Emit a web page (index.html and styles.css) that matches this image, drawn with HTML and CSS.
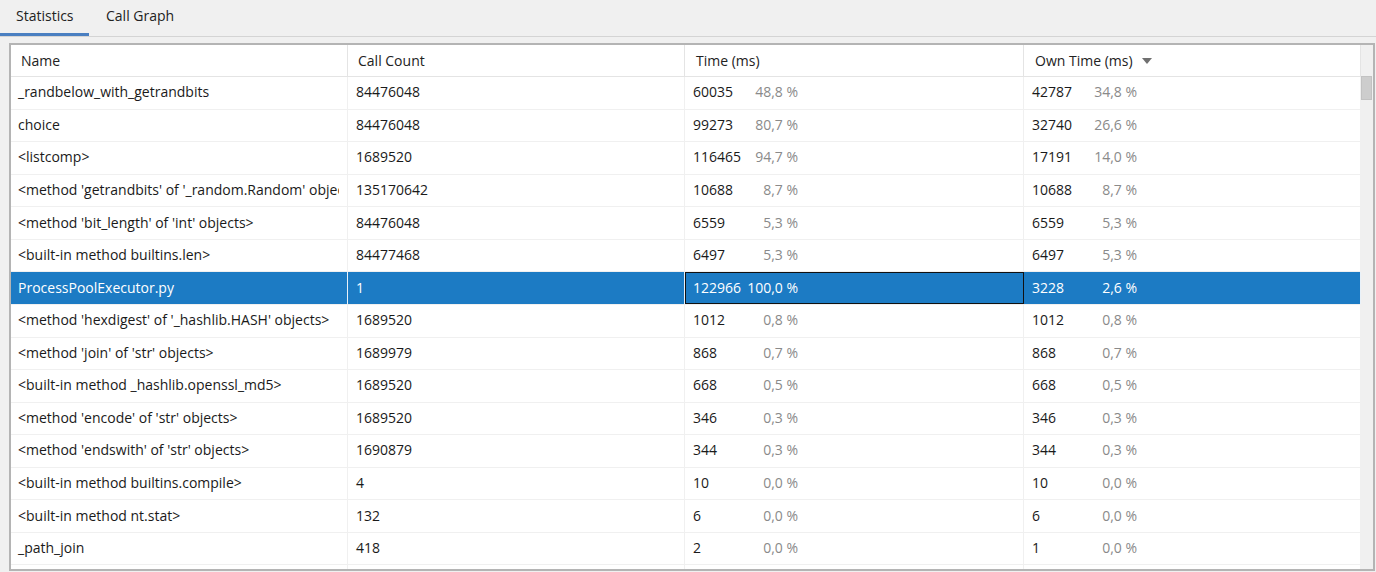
FILE: index.html
```html
<!DOCTYPE html>
<html>
<head>
<meta charset="utf-8">
<link rel="stylesheet" href="styles.css">
</head>
<body>
<div class="tabs">
  <div class="tab active">Statistics</div>
  <div class="tab">Call Graph</div>
</div>
<div class="frame">
  <div class="table">
    <div class="row head">
      <div class="cell">Name</div>
      <div class="cell">Call Count</div>
      <div class="cell">Time (ms)</div>
      <div class="cell">Own Time (ms) <span class="sort"></span></div>
    </div>
    <div class="row"><div class="cell">_randbelow_with_getrandbits</div><div class="cell">84476048</div><div class="cell t"><span class="n">60035</span><span class="p">48,8 %</span></div><div class="cell t"><span class="n">42787</span><span class="p">34,8 %</span></div></div>
    <div class="row"><div class="cell">choice</div><div class="cell">84476048</div><div class="cell t"><span class="n">99273</span><span class="p">80,7 %</span></div><div class="cell t"><span class="n">32740</span><span class="p">26,6 %</span></div></div>
    <div class="row"><div class="cell">&lt;listcomp&gt;</div><div class="cell">1689520</div><div class="cell t"><span class="n">116465</span><span class="p">94,7 %</span></div><div class="cell t"><span class="n">17191</span><span class="p">14,0 %</span></div></div>
    <div class="row"><div class="cell"><span class="clip">&lt;method 'getrandbits' of '_random.Random' objects&gt;</span></div><div class="cell">135170642</div><div class="cell t"><span class="n">10688</span><span class="p">8,7 %</span></div><div class="cell t"><span class="n">10688</span><span class="p">8,7 %</span></div></div>
    <div class="row"><div class="cell">&lt;method 'bit_length' of 'int' objects&gt;</div><div class="cell">84476048</div><div class="cell t"><span class="n">6559</span><span class="p">5,3 %</span></div><div class="cell t"><span class="n">6559</span><span class="p">5,3 %</span></div></div>
    <div class="row"><div class="cell">&lt;built-in method builtins.len&gt;</div><div class="cell">84477468</div><div class="cell t"><span class="n">6497</span><span class="p">5,3 %</span></div><div class="cell t"><span class="n">6497</span><span class="p">5,3 %</span></div></div>
    <div class="row sel"><div class="cell">ProcessPoolExecutor.py</div><div class="cell">1</div><div class="cell t focus"><span class="n">122966</span><span class="p">100,0 %</span></div><div class="cell t"><span class="n">3228</span><span class="p">2,6 %</span></div></div>
    <div class="row"><div class="cell">&lt;method 'hexdigest' of '_hashlib.HASH' objects&gt;</div><div class="cell">1689520</div><div class="cell t"><span class="n">1012</span><span class="p">0,8 %</span></div><div class="cell t"><span class="n">1012</span><span class="p">0,8 %</span></div></div>
    <div class="row"><div class="cell">&lt;method 'join' of 'str' objects&gt;</div><div class="cell">1689979</div><div class="cell t"><span class="n">868</span><span class="p">0,7 %</span></div><div class="cell t"><span class="n">868</span><span class="p">0,7 %</span></div></div>
    <div class="row"><div class="cell">&lt;built-in method _hashlib.openssl_md5&gt;</div><div class="cell">1689520</div><div class="cell t"><span class="n">668</span><span class="p">0,5 %</span></div><div class="cell t"><span class="n">668</span><span class="p">0,5 %</span></div></div>
    <div class="row"><div class="cell">&lt;method 'encode' of 'str' objects&gt;</div><div class="cell">1689520</div><div class="cell t"><span class="n">346</span><span class="p">0,3 %</span></div><div class="cell t"><span class="n">346</span><span class="p">0,3 %</span></div></div>
    <div class="row"><div class="cell">&lt;method 'endswith' of 'str' objects&gt;</div><div class="cell">1690879</div><div class="cell t"><span class="n">344</span><span class="p">0,3 %</span></div><div class="cell t"><span class="n">344</span><span class="p">0,3 %</span></div></div>
    <div class="row"><div class="cell">&lt;built-in method builtins.compile&gt;</div><div class="cell">4</div><div class="cell t"><span class="n">10</span><span class="p">0,0 %</span></div><div class="cell t"><span class="n">10</span><span class="p">0,0 %</span></div></div>
    <div class="row"><div class="cell">&lt;built-in method nt.stat&gt;</div><div class="cell">132</div><div class="cell t"><span class="n">6</span><span class="p">0,0 %</span></div><div class="cell t"><span class="n">6</span><span class="p">0,0 %</span></div></div>
    <div class="row"><div class="cell">_path_join</div><div class="cell">418</div><div class="cell t"><span class="n">2</span><span class="p">0,0 %</span></div><div class="cell t"><span class="n">1</span><span class="p">0,0 %</span></div></div>
    <div class="row"><div class="cell"></div><div class="cell"></div><div class="cell"></div><div class="cell"></div></div>
  </div>
  <div class="scrollbar"><div class="thumb"></div></div>
</div>
</body>
</html>
```

FILE: styles.css
```css
* { box-sizing: border-box; }
html, body { margin: 0; padding: 0; }
body {
  width: 1376px;
  height: 572px;
  overflow: hidden;
  background: #f0f0f0;
  font-family: "Open Sans", "Noto Sans", sans-serif;
  font-size: 14px;
  color: #1a1a1a;
}
.tabs {
  display: flex;
  height: 37px;
  border-bottom: 1px solid #d4d4d4;
}
.tab {
  height: 36px;
  padding: 6px 0 0 0;
  color: #222;
}
.tab:first-child { width: 89px; padding-left: 16px; }
.tab:nth-child(2) { padding-left: 17px; }
.tab.active { border-bottom: 3px solid #4a7fc1; }
.frame {
  margin: 6px 1px 0 9px;
  height: 528px;
  border: 2px solid #b4b4b4;
  display: flex;
  background: #fff;
  overflow: hidden;
}
.table {
  width: 1350px;
  flex: none;
}
.row {
  display: grid;
  grid-template-columns: 337px 337px 339px 337px;
  height: 32.57px;
  border-bottom: 1px solid #f0f0f0;
}
.row.head {
  height: 32px;
  border-bottom: 1px solid #e4e4e4;
}
.cell {
  border-right: 1px solid #f0f0f0;
  padding: 0 8px 2px 8px;
  display: flex;
  align-items: center;
  white-space: nowrap;
  overflow: hidden;
}
.cell:first-child { padding-left: 7px; }
.clip { display: block; overflow: hidden; max-width: 100%; }
.head .cell {
  padding-left: 10px;
  padding-bottom: 1px;
  border-right: 1px solid #e4e4e4;
  color: #222;
}
.head .cell:nth-child(3) { padding-left: 11px; }
.head .cell:nth-child(4) { padding-left: 11px; }
.sort {
  display: inline-block;
  width: 0; height: 0;
  margin-left: 9px;
  margin-top: 1px;
  border-left: 5px solid transparent;
  border-right: 5px solid transparent;
  border-top: 6px solid #707070;
}
.n { width: 53px; flex: none; }
.p {
  width: 52px;
  flex: none;
  text-align: right;
  color: #8a8a8a;
}
.sel .cell {
  background: #1c7bc4;
  color: #fff;
  border-right: 1px solid #e8f1f9;
}
.sel .p { color: #fff; }
.sel .focus {
  border: 1px solid #111;
  padding-left: 7px;
}
.scrollbar {
  flex: 1;
  background: #f0f0f0;
  padding-top: 31px;
}
.thumb {
  height: 24px;
  margin: 0 1px 0 0;
  background: #cdcdcd;
  border: 1px solid #c2c2c2;
}
```
